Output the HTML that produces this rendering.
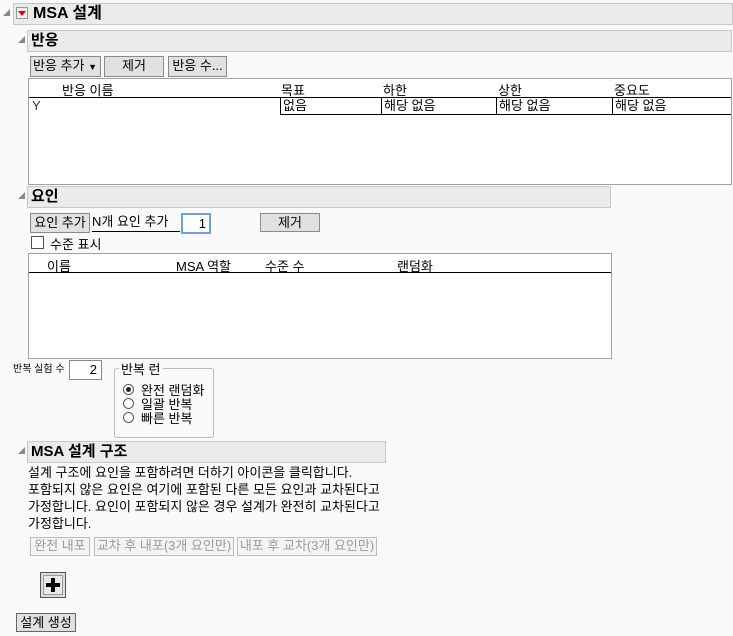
<!DOCTYPE html>
<html><head><meta charset="utf-8"><style>
body{margin:0;width:733px;height:636px;background:#f9f9f9;font-family:"Liberation Sans","Noto Sans CJK KR",sans-serif;font-size:13px;color:#000;position:relative;overflow:hidden}
.a{position:absolute;white-space:nowrap}
.hd{position:absolute;background:#ebebeb;border:1px solid #c8c8c8;box-sizing:border-box;font-weight:bold;font-size:15px;line-height:19px;padding-left:3px}
.tri{position:absolute;width:0;height:0;border-left:7px solid transparent;border-bottom:7px solid #888}
.btn{position:absolute;background:#e1e1e1;border:1px solid #8a8a8a;box-sizing:border-box;text-align:center;line-height:18px;font-size:13px}
.dis{position:absolute;background:#f4f4f4;border:1px solid #bcbcbc;box-sizing:border-box;text-align:center;line-height:16px;color:#9a9a9a}
.tbl{position:absolute;background:#fff;border:1px solid #a0a0a0;box-sizing:border-box}
.cell{position:absolute;border:1px solid #000;box-sizing:border-box;line-height:15px;padding-left:2px;background:#fff}
.rad{position:absolute;width:11px;height:11px;border:1px solid #555;border-radius:50%;background:#fff;box-sizing:border-box}
</style></head><body>
<div class="tri" style="left:3px;top:9px"></div>
<div class="hd" style="left:13px;top:3px;width:720px;height:22px;font-size:16px;line-height:20px;padding-left:19px">MSA 설계</div>
<div class="a" style="left:16px;top:7px;width:12px;height:12px;border:1px solid #999;background:#f0f0f0;box-sizing:border-box"></div>
<div class="a" style="left:18px;top:11px;width:0;height:0;border-left:4px solid transparent;border-right:4px solid transparent;border-top:5px solid #d00"></div>

<div class="tri" style="left:18px;top:36px"></div>
<div class="hd" style="left:27px;top:30px;width:705px;height:22px">반응</div>
<div class="btn" style="left:30px;top:56px;width:71px;height:21px;text-align:left;padding-left:2px">반응 추가 <span style="font-size:9px">▼</span></div>
<div class="btn" style="left:104px;top:56px;width:60px;height:21px">제거</div>
<div class="btn" style="left:168px;top:56px;width:59px;height:21px">반응 수...</div>
<div class="tbl" style="left:28px;top:78px;width:704px;height:107px"></div>
<div class="a" style="left:62px;top:80px">반응 이름</div>
<div class="a" style="left:281px;top:80px">목표</div>
<div class="a" style="left:383px;top:80px">하한</div>
<div class="a" style="left:498px;top:80px">상한</div>
<div class="a" style="left:614px;top:80px">중요도</div>
<div class="a" style="left:29px;top:97px;width:702px;height:1px;background:#000"></div>
<div class="a" style="left:32px;top:98px;color:#333">Y</div>
<div class="cell" style="left:280px;top:97px;width:102px;height:18px">없음</div>
<div class="cell" style="left:381px;top:97px;width:116px;height:18px">해당 없음</div>
<div class="cell" style="left:496px;top:97px;width:117px;height:18px">해당 없음</div>
<div class="cell" style="left:612px;top:97px;width:119px;height:18px;border-right:none">해당 없음</div>

<div class="tri" style="left:18px;top:192px"></div>
<div class="hd" style="left:27px;top:186px;width:584px;height:22px">요인</div>
<div class="btn" style="left:30px;top:213px;width:60px;height:20px">요인 추가</div>
<div class="a" style="left:92px;top:213px;width:88px;border-bottom:1px solid #000;line-height:18px">N개 요인 추가</div>
<div class="a" style="left:181px;top:213px;width:30px;height:21px;border:2px solid #6ea0e0;background:#fff;box-sizing:border-box;text-align:right;padding-right:3px;line-height:17px">1</div>
<div class="btn" style="left:260px;top:213px;width:60px;height:19px;line-height:17px">제거</div>
<div class="a" style="left:31px;top:236px;width:13px;height:13px;border:1px solid #555;background:#fff;box-sizing:border-box"></div>
<div class="a" style="left:50px;top:234px">수준 표시</div>
<div class="tbl" style="left:28px;top:253px;width:584px;height:106px"></div>
<div class="a" style="left:47px;top:256px">이름</div>
<div class="a" style="left:176px;top:256px">MSA 역할</div>
<div class="a" style="left:265px;top:256px">수준 수</div>
<div class="a" style="left:397px;top:256px">랜덤화</div>
<div class="a" style="left:29px;top:272px;width:582px;height:1px;background:#000"></div>

<div class="a" style="left:13px;top:360px;font-size:10px">반복 실험 수</div>
<div class="a" style="left:69px;top:360px;width:33px;height:20px;border:1px solid #888;background:#fff;box-sizing:border-box;text-align:right;padding-right:4px;line-height:18px">2</div>
<div class="a" style="left:114px;top:368px;width:100px;height:70px;border:1px solid #bbb;border-radius:3px;box-sizing:border-box"></div>
<div class="a" style="left:119px;top:359px;background:#f9f9f9;padding:0 2px">반복 런</div>
<div class="rad" style="left:123px;top:384px"></div><div class="a" style="left:126px;top:387px;width:5px;height:5px;border-radius:50%;background:#222"></div>
<div class="a" style="left:141px;top:380px">완전 랜덤화</div>
<div class="rad" style="left:123px;top:398px"></div><div class="a" style="left:141px;top:394px">일괄 반복</div>
<div class="rad" style="left:123px;top:412px"></div><div class="a" style="left:141px;top:408px">빠른 반복</div>

<div class="tri" style="left:18px;top:447px"></div>
<div class="hd" style="left:27px;top:441px;width:359px;height:22px">MSA 설계 구조</div>
<div class="a" style="left:28px;top:464px;line-height:17px">설계 구조에 요인을 포함하려면 더하기 아이콘을 클릭합니다.<br>포함되지 않은 요인은 여기에 포함된 다른 모든 요인과 교차된다고<br>가정합니다. 요인이 포함되지 않은 경우 설계가 완전히 교차된다고<br>가정합니다.</div>
<div class="dis" style="left:30px;top:537px;width:60px;height:19px">완전 내포</div>
<div class="dis" style="left:94px;top:537px;width:140px;height:19px">교차 후 내포(3개 요인만)</div>
<div class="dis" style="left:237px;top:537px;width:140px;height:19px">내포 후 교차(3개 요인만)</div>
<div class="a" style="left:40px;top:572px;width:26px;height:26px;border:1px solid #555;background:#ddd;box-sizing:border-box"></div>
<div class="a" style="left:43px;top:575px;width:20px;height:20px;border:1px solid #999;background:#e8e8e8;box-sizing:border-box"></div>
<div class="a" style="left:51px;top:578px;width:4px;height:14px;background:#000"></div>
<div class="a" style="left:46px;top:583px;width:14px;height:4px;background:#000"></div>
<div class="btn" style="left:16px;top:613px;width:60px;height:19px;line-height:17px;border-color:#666">설계 생성</div>
</body></html>
